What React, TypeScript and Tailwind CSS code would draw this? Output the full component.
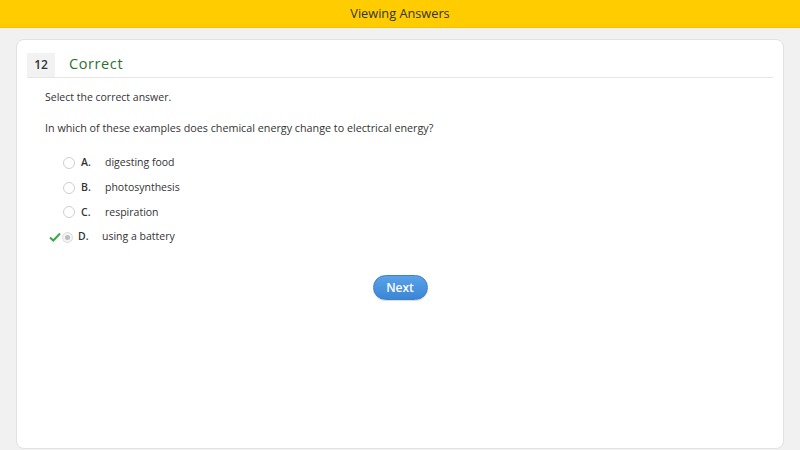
import React from "react";

const options = [
  { letter: "A.", text: "digesting food" },
  { letter: "B.", text: "photosynthesis" },
  { letter: "C.", text: "respiration" },
  { letter: "D.", text: "using a battery", selected: true },
];

const App: React.FC = () => {
  return (
    <div className="w-[800px] h-[450px] overflow-hidden bg-[#f1f1f1] font-['Open_Sans',sans-serif] text-[#333]">
      {/* Top bar */}
      <header className="h-[28px] bg-[#ffcc00] border-b border-[#f3c200] flex items-center justify-center">
        <span className="text-[12.75px] text-[#333]">Viewing Answers</span>
      </header>

      {/* Card */}
      <div className="mx-4 mt-[11px] h-[410px] bg-white rounded-lg border border-[#e2e2e2] px-[10px] pt-[13px]">
        <div className="flex items-stretch border-b border-[#e6e6e6] h-[25px]">
          <div className="w-[28px] bg-[#f2f2f2] flex items-center justify-center text-[12px] font-semibold text-[#333]">
            12
          </div>
          <div className="pl-[14px] flex items-center text-[14.5px] tracking-[0.6px] text-[#2f6f30] leading-none -mt-[2px]">
            Correct
          </div>
        </div>

        <div className="pl-[18px] text-[10.5px]">
          <p className="mt-[11px] leading-[16px]">Select the correct answer.</p>
          <p className="mt-[15px] leading-[16px] text-[10.75px]">
            In which of these examples does chemical energy change to electrical energy?
          </p>

          <ul className="mt-[19px] flex flex-col gap-[8.7px]">
            {options.map((o) => (
              <li key={o.letter} className="flex items-center h-[16px]">
                {o.selected ? (
                  <div className="flex items-center ml-[4px]">
                    <svg width="12" height="10" viewBox="0 0 12 10" className="mr-[1px]">
                      <path d="M1 5.5 L4.3 8.5 L11 1.5" fill="none" stroke="#3aa845" strokeWidth="2" />
                    </svg>
                    <span className="w-[11px] h-[11px] rounded-full border border-[#dcdcdc] bg-[#f4f4f4] flex items-center justify-center">
                      <span className="w-[5px] h-[5px] rounded-full bg-[#bdbdbd]" />
                    </span>
                    <span className="ml-[5px] w-[24px] font-semibold">{o.letter}</span>
                  </div>
                ) : (
                  <div className="flex items-center ml-[18px]">
                    <span className="w-[12px] h-[12px] rounded-full border border-[#cfcfcf] bg-white" />
                    <span className="ml-[6px] w-[24px] font-semibold">{o.letter}</span>
                  </div>
                )}
                <span>{o.text}</span>
              </li>
            ))}
          </ul>
        </div>

        <div className="flex justify-center mt-[30px]">
          <button className="w-[55px] h-[25px] rounded-full bg-gradient-to-b from-[#5aa2e8] to-[#3a86d6] border border-[#3b82cf] text-white text-[12px] font-semibold shadow-[0_1px_1px_rgba(0,0,0,0.15)]">
            Next
          </button>
        </div>
      </div>
    </div>
  );
};

export default App;
